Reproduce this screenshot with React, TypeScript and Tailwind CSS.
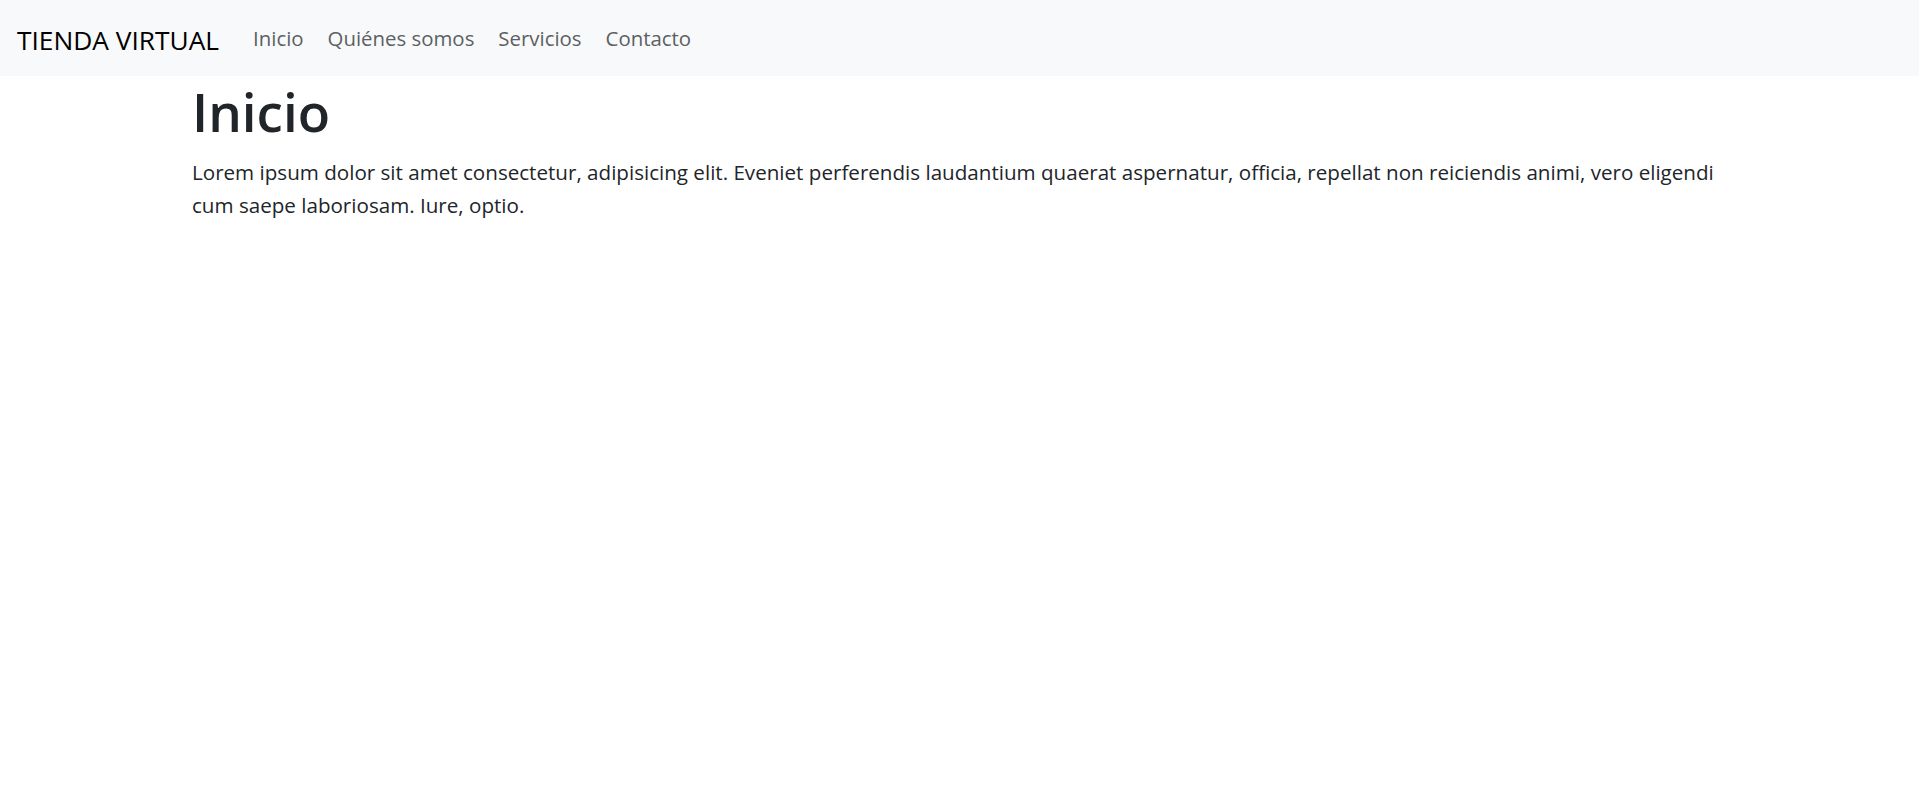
const links = ["Inicio", "Quiénes somos", "Servicios", "Contacto"]

export default function App() {
  return (
    <div className="min-h-screen bg-white font-['Open_Sans',sans-serif] text-[#212529]">
      <nav className="flex h-[76px] items-center bg-[#f8f9fa] px-[17px]">
        <a href="#" className="mr-[22px] pt-[4px] text-[26.3px] leading-none text-black">
          TIENDA VIRTUAL
        </a>
        <ul className="flex items-center">
          {links.map((link) => (
            <li key={link}>
              <a href="#" className="block px-[12px] text-[20.4px] leading-none text-[#5c5f63]">
                {link}
              </a>
            </li>
          ))}
        </ul>
      </nav>

      <main className="mx-auto w-[1567px] px-[16px] pt-[3px]">
        <h1 className="mb-[11px] text-[53px] font-semibold leading-[66px]">Inicio</h1>
        <p className="text-[20.6px] leading-[33px]">
          Lorem ipsum dolor sit amet consectetur, adipisicing elit. Eveniet perferendis laudantium
          quaerat aspernatur, officia, repellat non reiciendis animi, vero eligendi cum saepe
          laboriosam. Iure, optio.
        </p>
      </main>
    </div>
  )
}
